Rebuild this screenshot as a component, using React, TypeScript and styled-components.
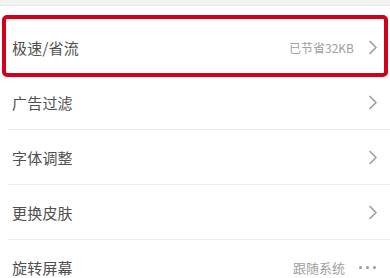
import styled, { createGlobalStyle } from "styled-components";

const GlobalStyle = createGlobalStyle`
  html, body {
    margin: 0;
    padding: 0;
    background: #ffffff;
  }
  body {
    font-family: "Noto Sans CJK SC", "Noto Sans", sans-serif;
  }
`;

const Page = styled.div`
  width: 390px;
  height: 278px;
  overflow: hidden;
  background: #ffffff;
`;

const TopBand = styled.div`
  height: 5px;
  background: #f3f3f3;
  border-bottom: 1px solid #e8e8e8;
`;

const List = styled.div`
  position: relative;
  padding-top: 14px;
`;

const Row = styled.div<{ $last?: boolean }>`
  display: flex;
  align-items: center;
  height: 54px;
  margin-left: 8px;
  padding: 0 12px 0 4px;
  border-bottom: ${(p) => (p.$last ? "none" : "1px solid #ececec")};
`;

const Label = styled.span`
  flex: 1;
  font-size: 15px;
  color: #505050;
  letter-spacing: 0.2px;
`;

const Value = styled.span<{ $size?: number }>`
  font-size: ${(p) => p.$size ?? 12}px;
  color: #a0a0a0;
  margin-right: 14px;
`;

const Highlight = styled.div`
  position: absolute;
  left: 2px;
  right: 2px;
  top: 9px;
  height: 54px;
  border: 4px solid #d3001b;
  border-radius: 5px;
  pointer-events: none;
`;

const Dots = styled.div`
  display: flex;
  gap: 4px;
  margin-right: 2px;
`;

const Dot = styled.span`
  width: 3px;
  height: 3px;
  border-radius: 50%;
  background: #9a9a9a;
`;

const Chevron = () => (
  <svg width="10" height="15" viewBox="0 0 10 15">
    <polyline
      points="2,1.5 8,7.5 2,13.5"
      fill="none"
      stroke="#a0a0a0"
      strokeWidth="1.7"
      strokeLinecap="round"
      strokeLinejoin="round"
    />
  </svg>
);

const App = () => {
  return (
    <Page>
      <GlobalStyle />
      <TopBand />
      <List>
        <Row>
          <Label>极速/省流</Label>
          <Value>已节省32KB</Value>
          <Chevron />
        </Row>
        <Row>
          <Label>广告过滤</Label>
          <Chevron />
        </Row>
        <Row>
          <Label>字体调整</Label>
          <Chevron />
        </Row>
        <Row>
          <Label>更换皮肤</Label>
          <Chevron />
        </Row>
        <Row $last>
          <Label>旋转屏幕</Label>
          <Value $size={13}>跟随系统</Value>
          <Dots>
            <Dot />
            <Dot />
            <Dot />
          </Dots>
        </Row>
        <Highlight />
      </List>
    </Page>
  );
};

export default App;
